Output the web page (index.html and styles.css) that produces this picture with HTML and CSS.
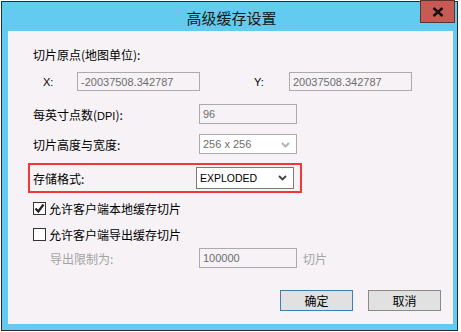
FILE: index.html
```html
<!DOCTYPE html>
<html lang="zh-CN">
<head>
    <meta charset="UTF-8">
    <title>高级缓存设置</title>
    <link rel="stylesheet" href="styles.css">
</head>
<body>
<div class="window">
    <!--标题栏-->
    <div class="titlebar">
        <span class="title">高级缓存设置</span>
        <div class="close">
            <svg width="12" height="10" viewBox="0 0 12 10"><path d="M1.5 1 L10.5 9 M10.5 1 L1.5 9" stroke="#111" stroke-width="2.4"/></svg>
        </div>
    </div>
    <!--内容部分-->
    <div class="client">
        <div class="row heading">切片原点(地图单位):</div>
        <div class="row xy">
            <span class="axis">X:</span>
            <span class="field wide disabled">-20037508.342787</span>
            <span class="axis axis-y">Y:</span>
            <span class="field wide disabled">20037508.342787</span>
        </div>
        <div class="row dpi">
            <span class="label">每英寸点数(<span class="latin">DPI</span>):</span>
            <span class="field disabled">96</span>
        </div>
        <div class="row size">
            <span class="label">切片高度与宽度:</span>
            <span class="field disabled select">256 x 256
                <svg class="chev" width="9" height="6" viewBox="0 0 9 6"><path d="M1 1 L4.5 4.5 L8 1" stroke="#b0b0b0" stroke-width="1.8" fill="none"/></svg>
            </span>
        </div>
        <div class="row format">
            <span class="label">存储格式:</span>
            <span class="field select active">EXPLODED
                <svg class="chev" width="9" height="6" viewBox="0 0 9 6"><path d="M1 1 L4.5 4.5 L8 1" stroke="#444" stroke-width="1.8" fill="none"/></svg>
            </span>
        </div>
        <div class="row check first">
            <span class="box"><svg width="11" height="11" viewBox="0 0 11 11"><path d="M1.5 5.5 L4.3 8.5 L9.5 1.5" stroke="#222" stroke-width="2.2" fill="none"/></svg></span>
            <span>允许客户端本地缓存切片</span>
        </div>
        <div class="row check second">
            <span class="box"></span>
            <span>允许客户端导出缓存切片</span>
        </div>
        <div class="row export">
            <span class="label dim">导出限制为:</span>
            <span class="field disabled">100000</span>
            <span class="unit dim">切片</span>
        </div>
        <div class="row buttons">
            <span class="btn default">确定</span>
            <span class="btn">取消</span>
        </div>
    </div>
</div>
</body>
</html>
```
FILE: styles.css
```css
* {
    margin: 0;
    padding: 0;
    box-sizing: border-box;
}

body {
    background: #fff;
    font-family: "Noto Sans CJK SC", "Liberation Sans", sans-serif;
    font-size: 12px;
    color: #000;
}

/*窗口外框*/
.window {
    position: relative;
    width: 457px;
    height: 330px;
    margin: 1px 0 0 1px;
    border: 1px solid #2b2b2b;
    background: #62cbef;
    padding: 0 4px 6px 6px;
    display: flex;
    flex-direction: column;
}

.titlebar {
    height: 29px;
    display: flex;
    align-items: center;
    justify-content: center;
}

.title {
    font-size: 15px;
    color: #1a1a1a;
    margin-top: 2px;
    margin-left: 2px;
}

/*关闭按钮 盖在边框上*/
.close {
    position: absolute;
    left: 418px;
    top: -2px;
    width: 35px;
    height: 23px;
    background: #c75a52;
    border: 1px solid #5b3330;
    display: flex;
    align-items: center;
    justify-content: center;
}

.client {
    flex: 1;
    background: #f6f2f6;
    padding: 0 12px 0 25px;
}

.row {
    display: flex;
    align-items: center;
}

.heading {
    margin-top: 16px;
    height: 14px;
}

.label {
    width: 166px;
    flex-shrink: 0;
}

.latin {
    font-family: "Liberation Sans", sans-serif;
    font-size: 11px;
}

.field {
    height: 20px;
    width: 98px;
    border: 1px solid #ababab;
    display: flex;
    align-items: center;
    padding-left: 3px;
    position: relative;
    font-family: "Liberation Sans", "Noto Sans CJK SC", sans-serif;
    font-size: 11px;
}

.field.disabled {
    color: #6d6d6d;
    background: #f6f2f6;
}

.field.wide {
    width: 123px;
    height: 19px;
}

.select.disabled {
    background: #fff;
}

.active {
    background: #fff;
    border-color: #7a7a7a;
    height: 22px;
    font-size: 10.5px;
}

.chev {
    position: absolute;
    right: 6px;
    top: 7px;
}

.xy {
    margin-top: 11px;
}

.axis {
    width: 44px;
    padding-left: 10px;
    flex-shrink: 0;
    font-family: "Liberation Sans", sans-serif;
    font-size: 11px;
}

.axis-y {
    width: 35px;
    margin-left: 54px;
    padding-left: 0;
}

.dpi {
    margin-top: 13px;
}

.size {
    margin-top: 10px;
}

/*红框标记*/
.format {
    margin: 9px 0 0 -5px;
    width: 274px;
    height: 30px;
    border: 2px solid #f0383c;
    padding-left: 3px;
}

.format .label {
    width: 163px;
}

.check {
    gap: 3px;
}

.check.first {
    margin-top: 9px;
    height: 13px;
}

.check.second {
    margin-top: 13px;
    height: 13px;
}

.box {
    width: 13px;
    height: 13px;
    border: 1px solid #333;
    background: #fff;
    display: flex;
    align-items: center;
    justify-content: center;
}

.export {
    margin-top: 7px;
}

.export .label {
    padding-left: 17px;
}

.dim {
    color: #a3a3a3;
}

.unit {
    margin-left: 6px;
}

.buttons {
    margin-top: 22px;
    justify-content: flex-end;
    gap: 15px;
}

.btn {
    width: 73px;
    height: 21px;
    background: #e1e1e1;
    border: 1px solid #8a8a8a;
    display: flex;
    align-items: center;
    justify-content: center;
}

.btn.default {
    border-color: #3c7fb1;
}
```
